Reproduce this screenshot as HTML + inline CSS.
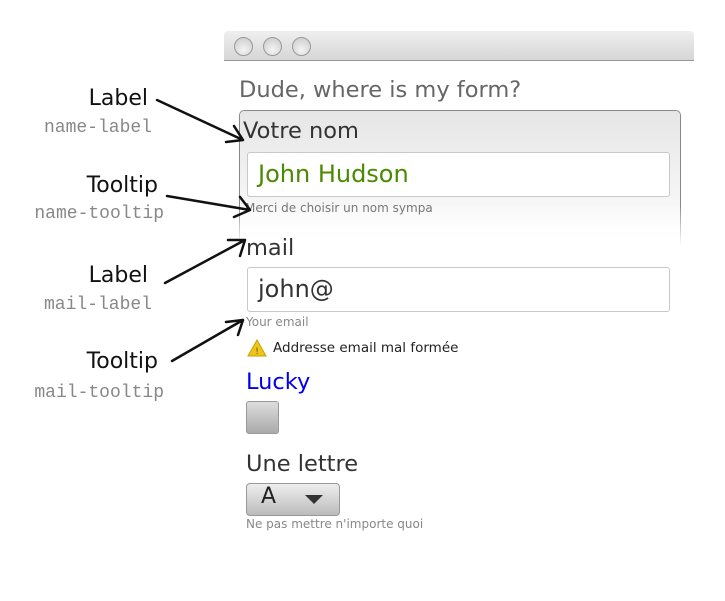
<!DOCTYPE html>
<html><head><meta charset="utf-8"><style>
body{margin:0;width:725px;height:601px;background:#fff;position:relative;overflow:hidden;font-family:"DejaVu Sans","Liberation Sans",sans-serif}
.a{position:absolute;white-space:nowrap}
.hand{font-family:"Comic Sans MS","DejaVu Sans",sans-serif;font-size:22px;color:#111;text-align:right;width:148px;left:0}
.mono{font-family:"Liberation Mono","DejaVu Sans Mono",monospace;font-size:18px;color:#888;text-align:right;width:152px;left:0}
.lbl{font-size:22.5px;color:#333}
.tip{font-size:12px;color:#888}
.inp{position:absolute;left:247px;height:45px;border:1px solid #c8c8c8;border-radius:3px;background:#fff;font-size:24px;line-height:43px;padding-left:10px;box-sizing:border-box;width:423px}
.c{position:absolute;top:37px;width:17px;height:17px;border-radius:50%;border:1px solid #999;background:radial-gradient(circle at 50% 70%,#f4f4f4,#c8c8c8)}
</style></head><body>
<div class="a" style="left:224px;top:31px;width:470px;height:29px;background:linear-gradient(#efefef,#d6d6d6);border-bottom:1px solid #999;border-radius:4px 4px 0 0"></div>
<div class="c" style="left:234px"></div>
<div class="c" style="left:263px"></div>
<div class="c" style="left:292px"></div>
<div class="a" style="left:239px;top:77px;font-size:22.5px;color:#666">Dude, where is my form?</div>
<div class="a" style="left:239px;top:110px;width:440px;height:135px;border:1px solid #888;border-bottom:none;border-radius:5px 5px 0 0;background:linear-gradient(#e6e6e6,#f4f4f4 60%,#fff);-webkit-mask:linear-gradient(#000 70%,transparent)"></div>
<div class="a lbl" style="left:243px;top:118px">Votre nom</div>
<div class="inp" style="top:152px;color:#4a8a00">John Hudson</div>
<div class="a tip" style="left:245px;top:201px;color:#777">Merci de choisir un nom sympa</div>
<div class="a lbl" style="left:246px;top:235px">mail</div>
<div class="inp" style="top:267px;color:#333">john@</div>
<div class="a tip" style="left:246px;top:315px">Your email</div>
<svg class="a" style="left:247px;top:339px" width="20" height="18"><path d="M10 1L19 17H1Z" fill="#f0c419" stroke="#c9a000"/><text x="10" y="15" font-size="9" text-anchor="middle" fill="#553">!</text></svg>
<div class="a" style="left:273px;top:340px;font-size:13.5px;color:#222">Addresse email mal formée</div>
<div class="a lbl" style="left:246px;top:369px;color:#0000ee">Lucky</div>
<div class="a" style="left:246px;top:401px;width:31px;height:31px;border:1px solid #999;border-radius:3px;background:linear-gradient(#ddd,#aaa)"></div>
<div class="a lbl" style="left:246px;top:451px">Une lettre</div>
<div class="a" style="left:246px;top:483px;width:92px;height:31px;border:1px solid #999;border-radius:4px;background:linear-gradient(#eee,#bbb)"></div>
<div class="a" style="left:261px;top:484px;font-size:22px;color:#222">A</div>
<div class="a" style="left:305px;top:495px;width:0;height:0;border-left:9px solid transparent;border-right:9px solid transparent;border-top:9px solid #333"></div>
<div class="a tip" style="left:246px;top:517px">Ne pas mettre n'importe quoi</div>

<div class="a hand" style="top:86px">Label</div>
<div class="a mono" style="top:118px">name-label</div>
<div class="a hand" style="top:173px;width:158px">Tooltip</div>
<div class="a mono" style="top:204px;width:164px">name-tooltip</div>
<div class="a hand" style="top:263px">Label</div>
<div class="a mono" style="top:295px">mail-label</div>
<div class="a hand" style="top:349px;width:158px">Tooltip</div>
<div class="a mono" style="top:383px;width:164px">mail-tooltip</div>
<svg class="a" style="left:0;top:0" width="725" height="601" fill="none" stroke="#111" stroke-width="2.5" stroke-linecap="round">
<path d="M157 100L243 140M243 140L226 142M243 140L234 126"/>
<path d="M167 196L250 210M250 210L234 217M250 210L240 197"/>
<path d="M165 283L245 240M245 240L228 240M245 240L240 256"/>
<path d="M172 361L243 320M243 320L226 322M243 320L238 335"/>
</svg>
</body></html>
